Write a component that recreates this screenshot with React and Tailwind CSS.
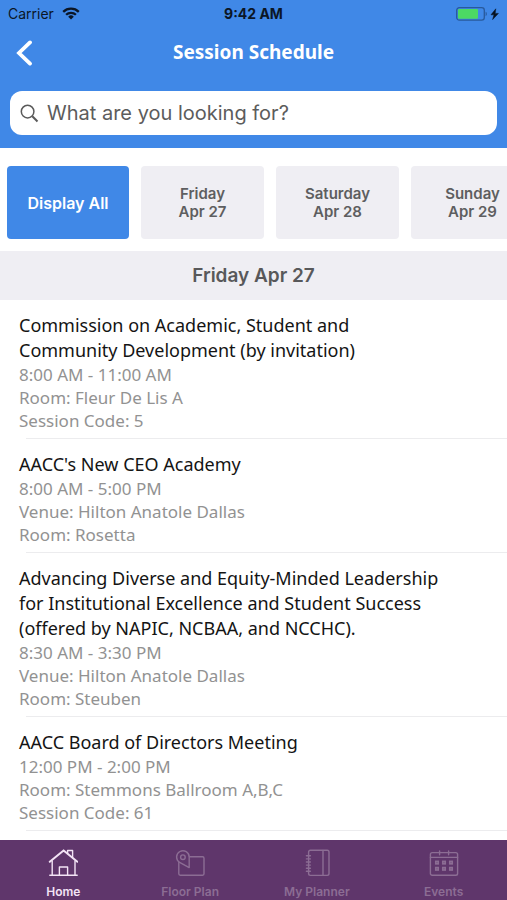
import React from "react";

const days = [
  { name: "Friday", date: "Apr 27" },
  { name: "Saturday", date: "Apr 28" },
  { name: "Sunday", date: "Apr 29" },
];

const sessions = [
  {
    title: "Commission on Academic, Student and Community Development (by invitation)",
    details: ["8:00 AM - 11:00 AM", "Room: Fleur De Lis A", "Session Code: 5"],
  },
  {
    title: "AACC's New CEO Academy",
    details: ["8:00 AM - 5:00 PM", "Venue: Hilton Anatole Dallas", "Room: Rosetta"],
  },
  {
    title:
      "Advancing Diverse and Equity-Minded Leadership for Institutional Excellence and Student Success (offered by NAPIC, NCBAA, and NCCHC).",
    details: ["8:30 AM - 3:30 PM", "Venue: Hilton Anatole Dallas", "Room: Steuben"],
  },
  {
    title: "AACC Board of Directors Meeting",
    details: ["12:00 PM - 2:00 PM", "Room: Stemmons Ballroom A,B,C", "Session Code: 61"],
  },
];

function WifiIcon() {
  return (
    <svg width="18" height="13" viewBox="0 0 18 13" fill="none" stroke="#0b1626" strokeWidth="2.3" aria-hidden="true">
      <path d="M1.2 4.8a11.2 11.2 0 0 1 15.6 0" />
      <path d="M4.1 7.8a7 7 0 0 1 9.8 0" />
      <path d="M9 12.4 6.2 9.7a4 4 0 0 1 5.6 0z" fill="#0b1626" stroke="none" />
    </svg>
  );
}

function BatteryIcon() {
  return (
    <svg width="43" height="14" viewBox="0 0 43 14" aria-hidden="true">
      <rect x="0.7" y="0.7" width="27.6" height="12.4" rx="2.6" fill="none" stroke="#285a9c" strokeWidth="1.3" />
      <rect x="2" y="2" width="20" height="9.8" rx="1" fill="#4cd964" />
      <path d="M29.6 4.8c1.6.5 1.6 3.9 0 4.4z" fill="#285a9c" />
      <path d="M39.8 1.8 35 7.8h3l-1.4 4.8 5.8-6.2h-3.2z" fill="#071322" stroke="#071322" strokeWidth="0.5" />
    </svg>
  );
}

function HomeIcon() {
  return (
    <svg width="30" height="28" viewBox="0 0 30 28" fill="none" stroke="currentColor" strokeWidth="1.4" strokeLinejoin="round" strokeLinecap="round" aria-hidden="true">
      <path d="M4.2 12v14.2M27 12v14.2M1.8 26.2h27.4" />
      <path d="M1.8 12.8 15.6 1.4l13.8 11.4" strokeWidth="2" />
      <path d="M19.6 4.2V1.5h5v7" />
      <path d="M11.4 26v-8h8.2v8" />
    </svg>
  );
}

function FloorPlanIcon() {
  return (
    <svg width="30" height="28" viewBox="0 0 30 28" fill="none" stroke="currentColor" strokeWidth="1.4" strokeLinejoin="round" strokeLinecap="round" aria-hidden="true">
      <path d="M14.4 7.8h13.2a1.4 1.4 0 0 1 1.4 1.4v15.6a1.4 1.4 0 0 1-1.4 1.4H5.2a1.4 1.4 0 0 1-1.4-1.4V13.4" />
      <path d="M14.2 18.6 4.6 13.4A6.3 6.3 0 1 1 14.2 8.2z" />
      <circle cx="7.9" cy="8.2" r="2.3" />
    </svg>
  );
}

function PlannerIcon() {
  return (
    <svg width="30" height="28" viewBox="0 0 30 28" fill="none" stroke="currentColor" strokeWidth="1.4" strokeLinecap="round" aria-hidden="true">
      <rect x="6.6" y="1.2" width="20.4" height="25.2" rx="1.8" />
      <path d="M21 1.4v24.8" />
      <path d="M4.4 6.8h4M4.4 9.9h4M4.4 13h4M4.4 16.1h4M4.4 19.2h4M4.4 22.3h4" />
    </svg>
  );
}

function EventsIcon() {
  return (
    <svg width="30" height="28" viewBox="0 0 30 28" fill="none" stroke="currentColor" strokeWidth="1.4" strokeLinecap="round" aria-hidden="true">
      <rect x="1.4" y="3.6" width="27.2" height="22.6" rx="1.8" />
      <path d="M1.4 8.4h27.2M10.6 2v3.8M19.6 2v3.8" />
      <g strokeWidth="1.7">
        <rect x="6.8" y="12.4" width="2.4" height="2.4" />
        <rect x="13.8" y="12.4" width="2.4" height="2.4" />
        <rect x="20.8" y="12.4" width="2.4" height="2.4" />
        <rect x="6.8" y="18.6" width="2.4" height="2.4" />
        <rect x="13.8" y="18.6" width="2.4" height="2.4" />
        <rect x="20.8" y="18.6" width="2.4" height="2.4" />
      </g>
    </svg>
  );
}

const tabs = [
  { label: "Home", Icon: HomeIcon, active: true },
  { label: "Floor Plan", Icon: FloorPlanIcon },
  { label: "My Planner", Icon: PlannerIcon },
  { label: "Events", Icon: EventsIcon },
];

export default function App() {
  return (
    <div className="flex h-dvh flex-col bg-white font-['Inter',sans-serif]">
      <header className="shrink-0 bg-[#4088e7] pb-[13px]">
        <div className="grid h-7 grid-cols-3 items-center px-2 pb-px text-[14px] text-[#0b1626]">
          <span className="flex items-center gap-2">
            Carrier <WifiIcon />
          </span>
          <span className="text-center font-bold">9:42 AM</span>
          <span className="flex justify-end">
            <BatteryIcon />
          </span>
        </div>
        <div className="grid h-[49px] grid-cols-[48px_1fr_48px] items-center">
          <button type="button" aria-label="Back" className="flex h-full items-center pl-4 text-white">
            <svg width="17" height="26" viewBox="0 0 17 26" fill="none" stroke="currentColor" strokeWidth="3.8" strokeLinecap="round" aria-hidden="true">
              <path d="M14 2.4 3 13l11 10.6" />
            </svg>
          </button>
          <h1 className="text-center font-['Noto_Sans',sans-serif] text-[19px] font-bold text-white">Session Schedule</h1>
        </div>
        <label className="mx-[10px] mt-[14px] flex h-11 items-center gap-2 rounded-xl bg-white px-[10px]">
          <svg width="19" height="19" viewBox="0 0 19 19" fill="none" stroke="#5a5a5a" aria-hidden="true">
            <circle cx="7.6" cy="7.6" r="6.3" strokeWidth="1.5" />
            <path d="m12.3 12.3 5.2 5.2" strokeWidth="2" />
          </svg>
          <input
            type="text"
            aria-label="Search sessions"
            placeholder="What are you looking for?"
            className="min-w-0 flex-1 bg-transparent text-[20px] text-[#5c5c5c] outline-none placeholder:text-[#5c5c5c]"
          />
        </label>
      </header>

      <div className="flex shrink-0 gap-3 overflow-x-auto pt-[18px] pb-3 pl-[7px] text-[15px] leading-[18px] font-semibold [scrollbar-width:none]">
        <button type="button" className="h-[73px] w-[122px] shrink-0 rounded bg-[#4088e7] text-[16px] text-white">
          Display All
        </button>
        {days.map((day) => (
          <button key={day.name} type="button" className="h-[73px] w-[123px] shrink-0 rounded bg-[#efeef3] text-[#5e5e60]">
            <span className="block">{day.name}</span>
            <span className="block">{day.date}</span>
          </button>
        ))}
      </div>

      <main className="min-h-0 flex-1 overflow-y-auto">
        <h2 className="bg-[#efeef3] text-center text-[19px] leading-[49px] font-semibold text-[#58585a]">Friday Apr 27</h2>
        <ul className="font-['Noto_Sans',sans-serif]">
          {sessions.map((session) => (
            <li key={session.title}>
              <div className="pt-[13px] pr-14 pb-[6px] pl-[19px]">
                <h3 className="text-[18px] leading-[25px] text-[#141414]">{session.title}</h3>
                {session.details.map((line) => (
                  <p key={line} className="text-[17px] leading-[23px] text-[#929292]">
                    {line}
                  </p>
                ))}
              </div>
              <div className="ml-[26px] h-px bg-[#ececee]" />
            </li>
          ))}
        </ul>
      </main>

      <nav className="grid h-[60px] shrink-0 grid-cols-4 bg-[#5f366b]">
        {tabs.map(({ label, Icon, active }) => (
          <a
            key={label}
            href="#"
            aria-current={active ? "page" : undefined}
            className={
              active
                ? "flex flex-col items-center pt-[9px] text-[#f3e3f5]"
                : "flex flex-col items-center pt-[9px] text-[#8c6d94]"
            }
          >
            <Icon />
            <span className="mt-[7px] text-[12px] leading-[15px] font-semibold">{label}</span>
          </a>
        ))}
      </nav>
    </div>
  );
}
